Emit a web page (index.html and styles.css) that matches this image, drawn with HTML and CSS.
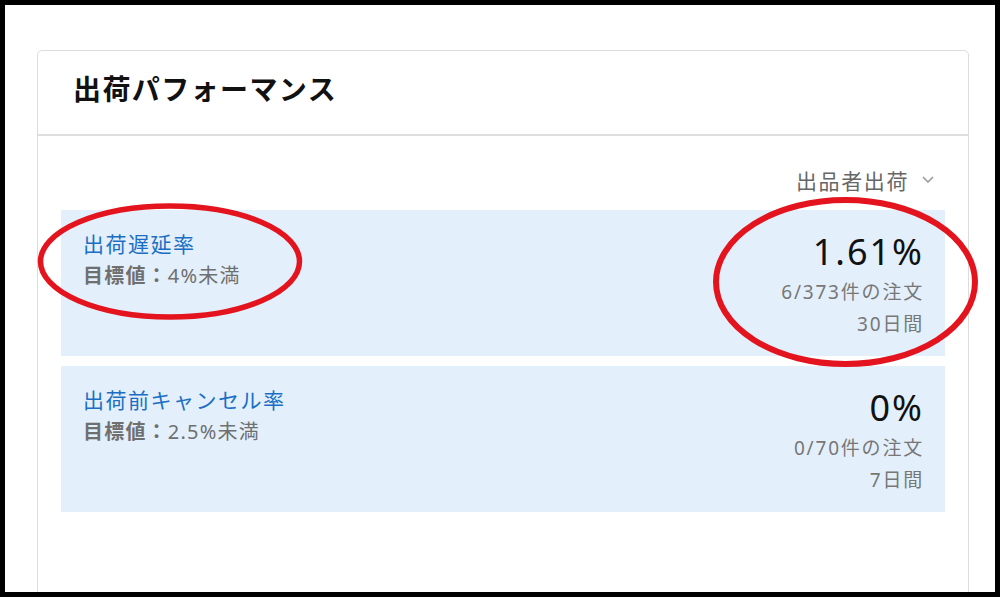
FILE: index.html
```html
<!DOCTYPE html>
<html lang="ja">
<head>
  <meta charset="UTF-8">
  <meta name="viewport" content="width=device-width, initial-scale=1.0">
  <title>出荷パフォーマンス</title>
  <link rel="stylesheet" href="styles.css">
</head>
<body>

  <div class="frame">
    <div class="card">
      <div class="card-header">
        <h2 class="card-title">出荷パフォーマンス</h2>
      </div>

      <div class="card-body">
        <div class="channel">
          <span class="channel-label">出品者出荷</span>
          <svg class="chevron" width="12" height="7" viewBox="0 0 12 7">
            <polyline points="1,1 6,6 11,1" fill="none" stroke="#9a9a9a" stroke-width="1.6"/>
          </svg>
        </div>

        <div class="metric">
          <div class="metric-info">
            <a class="metric-name" href="#">出荷遅延率</a>
            <div class="metric-goal"><b>目標値：</b>4%未満</div>
          </div>
          <div class="metric-value">
            <div class="rate">1.61%</div>
            <div class="sub">6/373件の注文</div>
            <div class="sub">30日間</div>
          </div>
        </div>

        <div class="metric">
          <div class="metric-info">
            <a class="metric-name" href="#">出荷前キャンセル率</a>
            <div class="metric-goal"><b>目標値：</b>2.5%未満</div>
          </div>
          <div class="metric-value">
            <div class="rate">0%</div>
            <div class="sub">0/70件の注文</div>
            <div class="sub">7日間</div>
          </div>
        </div>
      </div>
    </div>

    <!-- 赤丸の注釈 -->
    <svg class="marks" width="1000" height="597" viewBox="0 0 1000 597">
      <ellipse cx="170" cy="261.5" rx="129.5" ry="55.5" fill="none" stroke="#e3141d" stroke-width="5.5"/>
      <ellipse cx="845.5" cy="282" rx="129.5" ry="82" fill="none" stroke="#e3141d" stroke-width="6"/>
    </svg>
  </div>

</body>
</html>
```

FILE: styles.css
```css
body {
  margin: 0;
  font-family: "Noto Sans", "Noto Sans CJK JP", sans-serif;
  background-color: #fff;
}

.frame {
  position: relative;
  box-sizing: border-box;
  width: 1000px;
  height: 597px;
  border: 5px solid #000;
  padding: 45px 26px 0 32px;
  overflow: hidden;
  background-color: #fff;
}

.card {
  border: 1px solid #dcdcdc;
  border-radius: 5px;
  min-height: 600px;
  background-color: #fff;
}

.card-header {
  display: flex;
  align-items: center;
  height: 85px;
  padding: 0 0 9px 35px;
  box-sizing: border-box;
  border-bottom: 2px solid #dedede;
}

.card-title {
  margin: 0;
  font-size: 28px;
  font-weight: 700;
  letter-spacing: 1.4px;
  color: #111;
}

.card-body {
  padding: 29px 23px 0 23px;
}

.channel {
  display: flex;
  justify-content: flex-end;
  align-items: center;
  gap: 13px;
  height: 30px;
  margin: 0 11px 15px 0;
}

.channel-label {
  font-size: 21px;
  letter-spacing: 1.6px;
  color: #666;
}

.chevron {
  margin-top: -2px;
}

.metric {
  display: flex;
  justify-content: space-between;
  box-sizing: border-box;
  height: 146px;
  padding: 18px 21px 0 22px;
  background-color: #e3f0fb;
  margin-bottom: 10px;
}

.metric-info {
  display: flex;
  flex-direction: column;
  align-items: flex-start;
}

.metric-name {
  font-size: 21px;
  line-height: 32px;
  letter-spacing: 1.5px;
  color: #1b6ec4;
  text-decoration: none;
}

.metric-goal {
  font-size: 20px;
  line-height: 32px;
  letter-spacing: 1.2px;
  color: #6f6f6f;
}

.metric-goal b {
  font-weight: 700;
}

.metric-value {
  text-align: right;
}

.rate {
  font-size: 36px;
  line-height: 48px;
  letter-spacing: 2px;
  color: #111;
}

.sub {
  font-size: 19px;
  line-height: 32px;
  letter-spacing: 1.8px;
  color: #777;
}

.marks {
  position: absolute;
  left: -5px;
  top: -5px;
  pointer-events: none;
}
```
